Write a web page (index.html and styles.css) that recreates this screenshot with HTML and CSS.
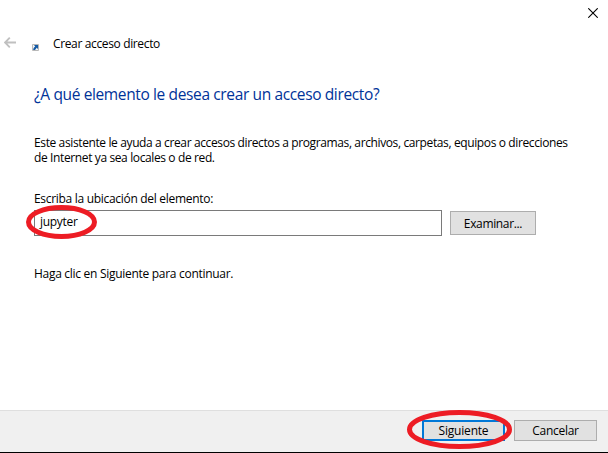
FILE: index.html
```html
<!DOCTYPE html>
<html lang="es">
<head>
<meta charset="utf-8">
<title>Crear acceso directo</title>
<link rel="stylesheet" href="styles.css">
</head>
<body>
<div class="wizard">
  <div class="titlebar">
    <svg class="close" width="10" height="10" viewBox="0 0 10 10"><path d="M.3.3l9.4 9.4M9.7.3L.3 9.7"/></svg>
  </div>
  <header class="header">
    <svg class="back" width="12" height="11" viewBox="0 0 12 11"><path d="M12 5.5H1M5.8.7L1 5.5l4.8 4.8"/></svg>
    <svg class="shortcut" width="7" height="7" viewBox="0 0 7 7"><path class="tile" d="M.5.5h6v6h-6z"/><path class="arrow" d="M2 1h4v4L4.700 3.800 3 6H1.200c0-1.600.6-2.600 2-3.600z"/></svg>
    <span class="name">Crear acceso directo</span>
  </header>
  <main class="content">
    <h1 class="heading">¿A qué elemento le desea crear un acceso directo?</h1>
    <p class="intro">Este asistente le ayuda a crear accesos directos a programas, archivos, carpetas, equipos o direcciones<br>de Internet ya sea locales o de red.</p>
    <div class="label">Escriba la ubicación del elemento:</div>
    <div class="row">
      <div class="field"><span>jupyter</span>
        <svg class="mark" width="71" height="34" viewBox="0 0 71 34"><ellipse cx="35.500" cy="17" rx="33" ry="14.500"/></svg>
      </div>
      <button class="button browse">Examinar...</button>
    </div>
    <p class="hint">Haga clic en Siguiente para continuar.</p>
  </main>
  <footer class="footer">
    <div class="button primary"><span>Siguiente</span>
      <svg class="mark" width="105" height="39" viewBox="0 0 105 39"><ellipse cx="52.500" cy="19.500" rx="50" ry="17"/></svg>
    </div>
    <div class="button cancel">Cancelar</div>
  </footer>
</div>
</body>
</html>
```
FILE: styles.css
```css
* { box-sizing: border-box; }
body { margin: 0; background: #fff; color: #000; font: 12px/15px "Open Sans", "Noto Sans", sans-serif; overflow: hidden; }
p, h1 { margin: 0; }
svg { display: block; flex: none; fill: none; }
.wizard { width: 608px; height: 453px; display: flex; flex-direction: column; white-space: nowrap; }
.titlebar { height: 30px; padding: 8px 10px 0 0; display: flex; justify-content: flex-end; }
.close { stroke: #000; stroke-width: 1.1; }
.header { height: 52px; padding-left: 4px; display: flex; align-items: flex-start; }
.back { margin-top: 7px; stroke: #c0c0c0; stroke-width: 1.9; }
.shortcut { margin: 14px 0 0 16px; }
.tile { fill: #f4f4f4; stroke: #b8b8b8; }
.arrow { fill: #145aa5; }
.name { margin: 6px 0 0 14px; letter-spacing: -.36px; }
.content { flex: 1; padding-left: 34px; }
.heading { height: 53px; padding-top: 1px; color: #003399; font-size: 15.5px; line-height: 22px; font-weight: 400; letter-spacing: -.37px; }
.intro { height: 56px; letter-spacing: -.38px; }
.label { height: 19px; letter-spacing: -.3px; }
.row { display: flex; align-items: center; gap: 8px; }
.field { position: relative; width: 408px; height: 26px; padding: 3px 5px; border: 1px solid #7a7a7a; letter-spacing: -.3px; }
.mark { position: absolute; stroke: #ed1c24; stroke-width: 5; }
.field .mark { left: -9px; top: -6px; }
.button { position: relative; display: flex; align-items: center; justify-content: center; width: 83px; height: 21px; padding: 0; border: 1px solid #adadad; background: #e1e1e1; color: #000; font: inherit; letter-spacing: -.3px; }
.browse { width: 86px; height: 24px; letter-spacing: -.35px; }
.hint { margin-top: 30px; letter-spacing: -.29px; }
.footer { height: 43px; padding: 9px 11px 0 0; display: flex; justify-content: flex-end; gap: 9px; border-top: 1px solid #dfdfdf; border-bottom: 1px solid #000; background: #f0f0f0; }
.primary { border: 2px solid #0078d7; letter-spacing: -.2px; }
.primary .mark { left: -17px; top: -12px; }
```
